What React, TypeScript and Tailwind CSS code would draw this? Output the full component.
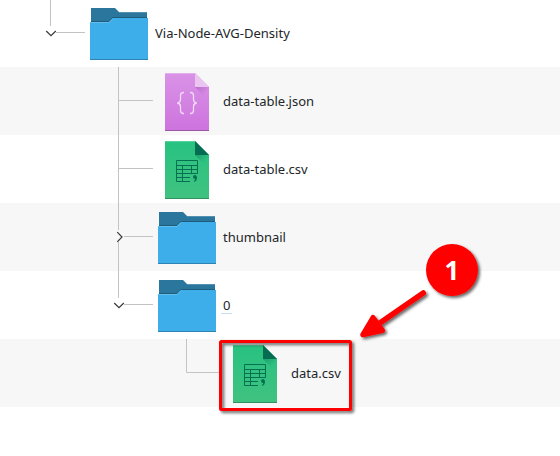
import React from 'react';

function Folder() {
  return (
    <svg className="mt-[9px] block shrink-0" width="58" height="52" viewBox="0 0 58 52">
      <path d="M1 0H25L29 4H57V14H1Z" fill="#2a769d" />
      <path d="M29 4H57V5H29Z" fill="#5391b1" />
      <path d="M1 13H19L23 9H57V10H23L19 14H1Z" fill="#1f5c7c" />
      <path d="M0 14H19L23 10H58V52H0Z" fill="#3daee9" />
      <path d="M0 14.5H19.2L23.2 10.5" fill="none" stroke="#64bfee" />
      <path d="M0 51H58V52H0Z" fill="#2e83b0" />
    </svg>
  );
}

function JsonFile() {
  return (
    <svg className="mt-[6px] block shrink-0" width="44" height="58" viewBox="0 0 44 58">
      <defs>
        <linearGradient id="jsonBody" x1="0" y1="0" x2="0" y2="1">
          <stop offset="0" stopColor="#d993e6" />
          <stop offset="1" stopColor="#cd73de" />
        </linearGradient>
        <linearGradient id="jsonShade" x1="0" y1="0" x2="1" y2="1">
          <stop offset="0" stopColor="#9c4fab" stopOpacity="0.5" />
          <stop offset="0.6" stopColor="#9c4fab" stopOpacity="0" />
        </linearGradient>
      </defs>
      <path d="M0 0H30L44 14V58H0Z" fill="url(#jsonBody)" />
      <path d="M30 14L44 28V14Z" fill="url(#jsonShade)" />
      <path d="M0 0H30V1H0Z" fill="#e3b0ed" />
      <path d="M30 0L44 14H30Z" fill="#e9c5f0" />
      <path d="M0 57H44V58H0Z" fill="#9a56a7" />
      <path
        d="M19 19.5H18.5Q15.5 19.5 15.5 22.5V26.5Q15.5 29.5 12.3 30Q15.5 30.5 15.5 33.5V37.5Q15.5 40.5 18.5 40.5H19M25 19.5H25.5Q28.5 19.5 28.5 22.5V26.5Q28.5 29.5 31.7 30Q28.5 30.5 28.5 33.5V37.5Q28.5 40.5 25.5 40.5H25"
        fill="none"
        stroke="#f2daf6"
        strokeWidth="1.3"
      />
    </svg>
  );
}

function CsvFile() {
  return (
    <svg className="mt-[6px] block shrink-0" width="44" height="58" viewBox="0 0 44 58">
      <defs>
        <linearGradient id="csvBody" x1="0" y1="0" x2="0" y2="1">
          <stop offset="0" stopColor="#27c281" />
          <stop offset="1" stopColor="#41c280" />
        </linearGradient>
        <linearGradient id="csvShade" x1="0" y1="0" x2="1" y2="1">
          <stop offset="0" stopColor="#087050" stopOpacity="0.45" />
          <stop offset="0.6" stopColor="#087050" stopOpacity="0" />
        </linearGradient>
      </defs>
      <path d="M0 0H30L44 14V58H0Z" fill="url(#csvBody)" />
      <path d="M30 14L44 28V14Z" fill="url(#csvShade)" />
      <path d="M0 0H30V1H0Z" fill="#5bd09f" />
      <path d="M30 0L44 14H30Z" fill="#046c51" />
      <path d="M0 57H44V58H0Z" fill="#319260" />
      <path
        d="M25 40.5H11.5V19.5H32.5V32.5H11.5M11 24.5H33M11 28.5H33M11 36.5H25M17.5 24V41M26.5 24V33"
        fill="none"
        stroke="#05704f"
      />
      <path d="M28 36Q28 34 30 34Q32 34 32 36.5Q32 40 29 41V40Q30.3 39 30.2 38Q28 38 28 36Z" fill="#05704f" />
    </svg>
  );
}

type RowProps = {
  // Guide lines, drawn in a 68px high strip that fills the indent before the icon.
  indent: string;
  width: number;
  lines: string;
  chevron?: string;
  striped?: boolean;
  first?: boolean;
  icon: React.ReactNode;
  children: React.ReactNode;
};

function Row({ indent, width, lines, chevron, striped, first, icon, children }: RowProps) {
  return (
    <div className={`flex h-[68px] ${striped ? 'bg-[#f7f7f7]' : 'bg-white'} ${first ? '-mt-px' : ''}`}>
      <svg className={`block h-[68px] shrink-0 ${indent}`} viewBox={`0 0 ${width} 68`} fill="none">
        <path d={lines} stroke="#c3c3c3" />
        {chevron && <path d={chevron} stroke="#35393c" strokeWidth="1.2" />}
      </svg>
      {icon}
      {children}
    </div>
  );
}

const label = 'mt-[25px] h-[18px] whitespace-nowrap leading-[18px]';

export default function App() {
  return (
    <main className="relative h-[456px] w-[560px] overflow-hidden bg-white font-['Noto_Sans',sans-serif] text-[13px] text-[#232629]">
      <Row first indent="w-[90px]" width={90} lines="M50.5 0V27M56 33.5H85" chevron="M46.2 32L51 36.7L55.8 32" icon={<Folder />}>
        <span className={`ml-[7px] ${label}`}>Via-Node-AVG-Density</span>
      </Row>
      <Row striped indent="w-[165px]" width={165} lines="M118.5 0V68M118 33.5H153" icon={<JsonFile />}>
        <span className={`ml-[14px] ${label}`}>data-table.json</span>
      </Row>
      <Row indent="w-[165px]" width={165} lines="M118.5 0V68M118 33.5H153" icon={<CsvFile />}>
        <span className={`ml-[14px] ${label}`}>data-table.csv</span>
      </Row>
      <Row striped indent="w-[158px]" width={158} lines="M118.5 0V27M118.5 39V68M124 33.5H153" chevron="M117.3 29.2L122 34L117.3 38.8" icon={<Folder />}>
        <span className={`ml-[7px] ${label}`}>thumbnail</span>
      </Row>
      <Row indent="w-[158px]" width={158} lines="M118.5 0V27M124 33.5H153" chevron="M114.2 32L119 36.7L123.8 32" icon={<Folder />}>
        <span className={`ml-[5px] border-b border-[#c5dff0] px-[2px] ${label}`}>0</span>
      </Row>
      <Row striped indent="w-[233px]" width={233} lines="M186.5 0V33.5H221" icon={<CsvFile />}>
        <span className={`ml-[14px] ${label}`}>data.csv</span>
      </Row>

      <svg className="pointer-events-none absolute inset-0" width="560" height="456" viewBox="0 0 560 456">
        <defs>
          <filter id="shadow" x="-20%" y="-20%" width="150%" height="150%">
            <feDropShadow dx="2" dy="2" stdDeviation="1.8" floodColor="#000" floodOpacity="0.6" />
          </filter>
        </defs>
        <rect x="220.5" y="341.5" width="130" height="68" rx="1" fill="none" stroke="#fe0000" strokeWidth="3" filter="url(#shadow)" />
        <g filter="url(#shadow)" fill="#fe0000" stroke="#fe0000" strokeLinejoin="round" strokeLinecap="round">
          <path d="M423.2 293L378 324.3" strokeWidth="5.6" />
          <path d="M362.7 334.8L373 317.5L382.5 330.5Z" strokeWidth="5" />
        </g>
        <circle cx="452" cy="270" r="26" fill="#fe0000" filter="url(#shadow)" />
      </svg>
      <span className="absolute left-[426px] top-[244px] flex h-[52px] w-[52px] items-center justify-center text-[26px] font-bold text-white">
        1
      </span>
    </main>
  );
}
